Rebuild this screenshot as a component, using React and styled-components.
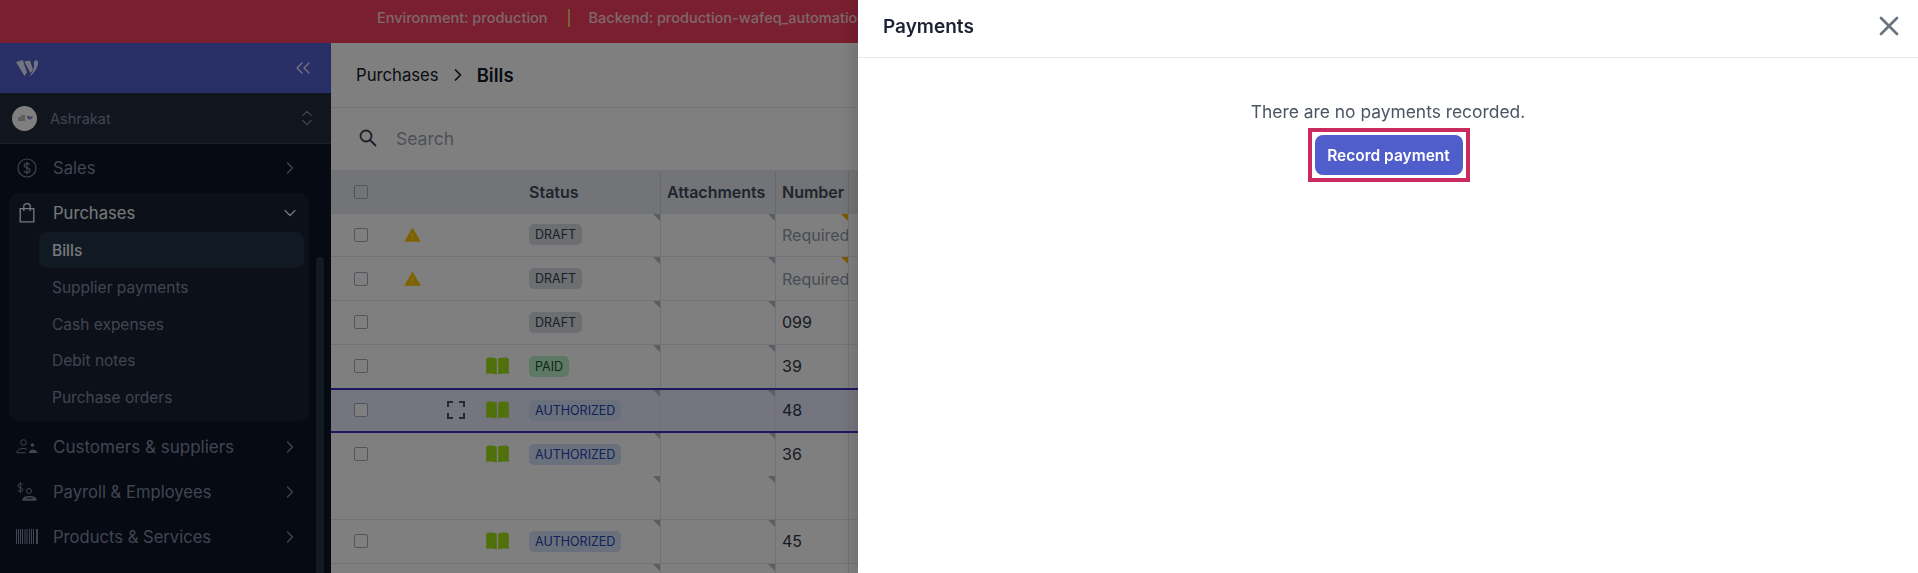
import styled, { createGlobalStyle } from "styled-components";
import { ChevronRight, ChevronDown, ChevronsUpDown, ChevronsLeft, X } from "lucide-react";

const GlobalStyle = createGlobalStyle`
  * { box-sizing: border-box; }
  html, body { margin: 0; height: 100%; overflow: hidden; }
  body { font-family: Inter, "Noto Sans", sans-serif; background: #fff; color: #1f2937; }
`;

const Page = styled.div`
  display: flex;
  flex-direction: column;
  height: 100vh;
  overflow: hidden;
`;
const EnvBar = styled.div`
  flex: 0 0 43px;
  display: flex;
  align-items: center;
  padding: 0 1060px 8px 377px;
  background: #f43e60;
  font-size: 14.5px;
  font-weight: 500;
  white-space: nowrap;
`;
const EnvText = styled.span`
  flex: ${(p) => (p.$clip ? "1 1 0" : "none")};
  min-width: 0;
  overflow: hidden;
  color: rgba(255, 255, 255, 0.75);
`;
const EnvDivider = styled.span`
  flex: none;
  width: 2px;
  height: 18px;
  margin: 0 19px 0 20px;
  background: #f5c26b;
`;
const Body = styled.div`
  flex: 1;
  display: flex;
  min-height: 0;
`;

/* sidebar */
const Sidebar = styled.aside`
  position: relative;
  flex: 0 0 331px;
  display: flex;
  flex-direction: column;
  background: #0c1426;
  overflow: hidden;
`;
const BrandRow = styled.div`
  flex: 0 0 50px;
  display: flex;
  align-items: center;
  justify-content: space-between;
  padding: 0 16px;
  background: #505ecc;
  color: #e6e8fa;
`;
const OrgRow = styled.div`
  flex: 0 0 51px;
  display: flex;
  align-items: center;
  padding: 0 14px 0 12px;
  background: #202a3c;
  border-bottom: 1px solid #334155;
`;
const Avatar = styled.div`
  width: 25px;
  height: 25px;
  border-radius: 50%;
  background: #fff;
  display: flex;
  align-items: center;
  justify-content: center;
  color: #505ecc;
  flex: none;
`;
const OrgName = styled.span`
  flex: 1;
  margin-left: 13px;
  font-size: 14.5px;
  color: #7f8ca3;
`;
const Nav = styled.nav`
  display: flex;
  flex-direction: column;
  padding: 1px 22px 0 9px;
`;
const NavItem = styled.div`
  height: 45px;
  display: flex;
  align-items: center;
  padding: 0 9px 0 0;
  color: ${(p) => (p.$active ? "#eef1f6" : "#7f8ca3")};
  svg {
    flex: none;
  }
`;
const NavIcon = styled.span`
  flex: 0 0 44px;
  display: flex;
  justify-content: center;
  padding-right: 6px;
  margin-left: -1px;
`;
const NavLabel = styled.span`
  flex: 1;
  font-size: ${(p) => p.$size || 16.6}px;
  margin-left: 1px;
`;
const NavGroup = styled.div`
  background: #182030;
  border-radius: 10px;
  height: 228px;
  margin: 3px 0;
`;
const GroupHead = styled(NavItem)`
  height: 39px;
`;
const SubList = styled.div`
  display: flex;
  flex-direction: column;
  padding: 0 5px 0 30px;
`;
const SubItem = styled.div`
  height: ${(p) => (p.$active ? "36px" : "36.7px")};
  margin-bottom: ${(p) => (p.$active ? "1px" : "0")};
  display: flex;
  align-items: center;
  padding-left: 13px;
  border-radius: 8px;
  font-size: 15.5px;
  background: ${(p) => (p.$active ? "#223246" : "transparent")};
  color: ${(p) => (p.$active ? "#eef1f6" : "#7f8ca3")};
  font-weight: ${(p) => (p.$active ? 500 : 400)};
`;
const Scroll = styled.div`
  position: absolute;
  top: 214px;
  bottom: 0;
  left: 316px;
  width: 8px;
  border-radius: 4px 4px 0 0;
  background: #283449;
`;

/* main */
const Main = styled.main`
  flex: 1;
  min-width: 0;
  display: flex;
  flex-direction: column;
`;
const Crumbs = styled.div`
  flex: 0 0 65px;
  display: flex;
  align-items: center;
  padding-left: 25px;
  padding-bottom: 1px;
  border-bottom: 1px solid #e3e6ea;
  color: #111827;
`;
const CrumbLink = styled.span`
  font-size: 16.7px;
`;
const CrumbSep = styled.span`
  display: flex;
  margin: 0 9px 0 9px;
`;
const CrumbNow = styled.span`
  font-size: 18.5px;
  font-weight: 600;
`;
const SearchRow = styled.div`
  flex: 0 0 63px;
  display: flex;
  align-items: center;
  padding: 0 0 2px 28px;
  gap: 19px;
  border-bottom: 1px solid #e3e6ea;
  color: #374151;
`;
const SearchHint = styled.span`
  font-size: 17.5px;
  color: #9ca3af;
`;
const Table = styled.div`
  display: flex;
  flex-direction: column;
`;
const Row = styled.div`
  position: relative;
  flex: none;
  height: ${(p) => (p.$head ? "42.5px" : "43.75px")};
  display: grid;
  grid-template-columns: 60px 42px 46px 37px 145px 115px 73px 1fr;
  align-items: stretch;
  background: ${(p) => (p.$head ? "#e6e9ee" : p.$selected ? "#e9ebfd" : "#fff")};
  border-bottom: ${(p) => (p.$flat ? "none" : "1px solid #e5e7eb")};
  ${(p) =>
    p.$selected &&
    `
    z-index: 1;
    height: 45.75px;
    margin: -1px 0;
    border-top: 2px solid #3b2fc4;
    border-bottom: 2px solid #3b2fc4;
  `}
`;
const Cell = styled.div`
  position: relative;
  display: flex;
  align-items: center;
  justify-content: ${(p) => (p.$center ? "center" : "flex-start")};
  padding-left: ${(p) => p.$pad || 0}px;
  border-right: ${(p) => (p.$line ? "1px solid #e2e5ea" : "none")};
  font-size: 16px;
  white-space: nowrap;
  overflow: hidden;
  color: ${(p) => (p.$muted ? "#9099a8" : "#2e3644")};
`;
const HeadCell = styled(Cell)`
  font-weight: 600;
  color: #3f4a5c;
  border-right-color: #cdd1d8;
`;
const Corner = styled.i`
  position: absolute;
  top: 0;
  right: 0;
  width: 0;
  height: 0;
  border-style: solid;
  border-width: 0 7px 7px 0;
  border-color: transparent ${(p) => (p.$warn ? "#f5b40f" : "#b4bcc7")} transparent transparent;
`;
const Check = styled.span`
  width: 14px;
  height: 14px;
  border: 1.5px solid #a3adbb;
  border-radius: 2px;
  background: ${(p) => (p.$head ? "transparent" : "#fff")};
`;
const Badge = styled.span`
  display: inline-flex;
  align-items: center;
  height: 21px;
  padding: 0 6px;
  border-radius: 5px;
  font-size: 12.5px;
  background: ${(p) => p.$bg};
  color: ${(p) => p.$fg};
`;

/* drawer */
const Scrim = styled.div`
  position: fixed;
  inset: 0;
  z-index: 2;
  background: rgba(0, 0, 0, 0.5);
`;
const Drawer = styled.section`
  position: fixed;
  top: 0;
  right: 0;
  bottom: 0;
  z-index: 3;
  width: 1060px;
  background: #fff;
  box-shadow: -6px 0 14px rgba(0, 0, 0, 0.12);
`;
const DrawerHead = styled.header`
  height: 58px;
  display: flex;
  align-items: center;
  justify-content: space-between;
  padding: 0 13px 5px 25px;
  border-bottom: 1px solid #e8e6ef;
  color: #6b7280;
`;
const DrawerTitle = styled.h2`
  margin: 0;
  font-size: 19px;
  font-weight: 600;
  color: #1c2233;
`;
const DrawerBody = styled.div`
  display: flex;
  flex-direction: column;
  align-items: center;
  padding-top: 42px;
`;
const Empty = styled.p`
  margin: 0 0 4px;
  font-size: 17.4px;
  line-height: 24px;
  color: #4b5563;
`;
const ButtonFrame = styled.div`
  display: flex;
  margin-left: 1px;
  padding: 3px;
  border: 4px solid #cb2a5f;
`;
const RecordButton = styled.button`
  width: 148px;
  height: 40px;
  border: 0;
  border-radius: 8px;
  background: #505ecc;
  color: #fff;
  font-family: inherit;
  font-size: 15.5px;
  font-weight: 600;
`;

const dollar = (
  <svg width="20" height="20" viewBox="0 0 20 20" fill="none" stroke="currentColor" strokeWidth="1.2">
    <circle cx="10" cy="10" r="9" />
    <path d="M12.8 6.9c-.5-1-1.5-1.5-2.8-1.5-1.6 0-2.8.8-2.8 2.2 0 3 5.8 1.600 5.800 4.700 0 1.400-1.300 2.300-3 2.300-1.400 0-2.500-.6-3-1.700M10 3.800v12.400" />
  </svg>
);
const bag = (
  <svg width="16" height="20" viewBox="0 0 16 20" fill="none" stroke="currentColor" strokeWidth="1.3">
    <path d="M1.2 5.600h13.600v13.200H1.200zM4.800 8V3.200a3.200 2.600 0 0 1 6.400 0V8" />
  </svg>
);
const people = (
  <svg width="22" height="15" viewBox="0 0 22 15" fill="none" stroke="currentColor" strokeWidth="1">
    <circle cx="7.500" cy="3.500" r="2.800" />
    <path d="M.8 13.800c0-2.600 2.800-4.300 6.400-4.300 1.300 0 2.500.2 3.500.7M.8 13.800h9" />
    <circle cx="16.500" cy="6" r="1.800" fill="currentColor" stroke="none" />
    <path d="M12.800 14c.2-2.400 1.800-3.600 4-3.600s4.500 1.200 4.700 3.600z" fill="currentColor" stroke="none" />
  </svg>
);
const payroll = (
  <svg width="22" height="20" viewBox="0 0 22 20" fill="none" stroke="currentColor" strokeWidth="1">
    <path d="M6.800 3C6.300 2.200 5.500 1.800 4.300 1.800 2.900 1.800 1.800 2.500 1.800 3.700c0 2.500 5 1.300 5 3.800 0 1.200-1 1.900-2.500 1.900-1.200 0-2.200-.5-2.700-1.400M4.300.3v10.700" />
    <circle cx="13" cy="9" r="2.500" />
    <path d="M6.500 18.800v-1.300c0-2.300 2.800-3.600 7-3.600s7 1.300 7 3.600v1.300z" fill="currentColor" stroke="none" />
    <path d="M10.500 16.200h6" stroke="#0c1426" />
  </svg>
);
const barcode = (
  <svg width="22" height="15" viewBox="0 0 22 15" fill="currentColor">
    {[0, 2, 4, 6, 8.500, 10.500, 13, 15, 17, 20].map((x) => (
      <rect key={x} x={x} y="0" width={x === 20 ? 2 : 1} height="15" />
    ))}
  </svg>
);
const logoPaths = (
  <>
    <path d="M0 3 6.800 1 11 13.500 8.500 17z" />
    <path d="M8.300 2.500 14 1.500l3 9-2.500 3.800z" />
    <path d="M17.800 3.700c.2-1.700 2-3 3.800-2.700-.6 1-.5 1.700.4 2.200.3 4.800-3.500 10.700-9 14.800 3.400-4 5.900-9.100 4.800-14.300z" />
  </>
);
const logo = (
  <svg width="24" height="18" viewBox="0 0 24 18" fill="currentColor">
    {logoPaths}
  </svg>
);
const miniLogo = (
  <svg width="16" height="7" viewBox="0 0 16 7">
    <path d="M4 1h4M1 3h7M1 5h7" stroke="#555" strokeWidth=".8" />
    <svg x="10" y="0" width="6" height="6" viewBox="0 0 24 18" fill="#505ecc">
      {logoPaths}
    </svg>
  </svg>
);
const warning = (
  <svg width="17" height="15" viewBox="0 0 16 14">
    <path d="M8 .4 15.800 13.800H.2z" fill="#ffc400" />
    <path d="M8 6v3.600M8 10.600v1.400" stroke="#fde68a" strokeWidth="1" />
  </svg>
);
const book = (
  <svg width="23" height="18" viewBox="0 0 23 18" fill="#a0e019">
    <path d="M2 .8C5 .4 8 .6 10.800 1.600V17.400C8 16.400 4.500 16.200 1.500 16.800A1 1 0 0 1 .2 16V2.600C.2 1.500 1 .9 2 .8z" />
    <path d="M21 .8C18 .4 15 .6 12.200 1.600V17.400C15 16.400 18.500 16.200 21.500 16.800A1 1 0 0 0 22.800 16V2.600C22.800 1.500 22 .9 21 .8z" />
  </svg>
);
const expand = (
  <svg width="18" height="18" viewBox="0 0 18 18" fill="none" stroke="#4b5563" strokeWidth="2">
    <path d="M1 6V1h5M12 1h5v5M17 12v5h-5M6 17H1v-5" />
  </svg>
);
const loupe = (
  <svg width="18" height="18" viewBox="0 0 18 18" fill="none" stroke="currentColor" strokeWidth="1.800">
    <circle cx="7" cy="7" r="5.500" />
    <path d="m11 11 6 6" />
  </svg>
);

const draft = { label: "DRAFT", bg: "#d9dde3", fg: "#374151" };
const paid = { label: "PAID", bg: "#bdf0cd", fg: "#14532d" };
const authorized = { label: "AUTHORIZED", bg: "#d5e2f8", fg: "#2342b5" };

const rows = [
  { warn: true, badge: draft, number: "Required", missing: true },
  { warn: true, badge: draft, number: "Required", missing: true },
  { badge: draft, number: "099" },
  { book: true, badge: paid, number: "39" },
  { book: true, expand: true, badge: authorized, number: "48", selected: true },
  { book: true, badge: authorized, number: "36", flat: true },
  {},
  { book: true, badge: authorized, number: "45" },
  {},
];

const subItems = ["Supplier payments", "Cash expenses", "Debit notes", "Purchase orders"];

const NavEntry = ({ icon, label, size }) => (
  <NavItem>
    <NavIcon>{icon}</NavIcon>
    <NavLabel $size={size}>{label}</NavLabel>
    <ChevronRight size={20} strokeWidth={1.5} />
  </NavItem>
);

const App = () => {
  return (
    <Page>
      <GlobalStyle />
      <EnvBar>
        <EnvText>Environment: production</EnvText>
        <EnvDivider />
        <EnvText $clip>Backend: production-wafeq_automation_tests</EnvText>
      </EnvBar>
      <Body>
        <Sidebar>
          <BrandRow>
            {logo}
            <ChevronsLeft size={24} strokeWidth={1.4} />
          </BrandRow>
          <OrgRow>
            <Avatar>{miniLogo}</Avatar>
            <OrgName>Ashrakat</OrgName>
            <ChevronsUpDown size={20} strokeWidth={1.4} color="#7f8ca3" />
          </OrgRow>
          <Nav>
            <NavEntry icon={dollar} label="Sales" />
            <NavGroup>
              <GroupHead $active>
                <NavIcon>{bag}</NavIcon>
                <NavLabel>Purchases</NavLabel>
                <ChevronDown size={20} strokeWidth={1.5} />
              </GroupHead>
              <SubList>
                <SubItem $active>Bills</SubItem>
                {subItems.map((item) => (
                  <SubItem key={item}>{item}</SubItem>
                ))}
              </SubList>
            </NavGroup>
            <NavEntry icon={people} label="Customers & suppliers" size={17} />
            <NavEntry icon={payroll} label="Payroll & Employees" />
            <NavEntry icon={barcode} label="Products & Services" />
          </Nav>
          <Scroll />
        </Sidebar>
        <Main>
          <Crumbs>
            <CrumbLink>Purchases</CrumbLink>
            <CrumbSep>
              <ChevronRight size={20} strokeWidth={2} />
            </CrumbSep>
            <CrumbNow>Bills</CrumbNow>
          </Crumbs>
          <SearchRow>
            {loupe}
            <SearchHint>Search</SearchHint>
          </SearchRow>
          <Table>
            <Row $head>
              <Cell $center>
                <Check $head />
              </Cell>
              <Cell />
              <Cell />
              <Cell />
              <HeadCell $pad={13} $line>
                Status
              </HeadCell>
              <HeadCell $pad={6} $line>
                Attachments
              </HeadCell>
              <HeadCell $pad={6} $line>
                Number
              </HeadCell>
              <Cell />
            </Row>
            {rows.map((row, i) => (
              <Row key={i} $selected={row.selected} $flat={row.flat}>
                <Cell $center>{row.badge && <Check />}</Cell>
                <Cell $center>{row.warn && warning}</Cell>
                <Cell $center>{row.expand && expand}</Cell>
                <Cell $center>{row.book && book}</Cell>
                <Cell $pad={13} $line>
                  {row.badge && (
                    <Badge $bg={row.badge.bg} $fg={row.badge.fg}>
                      {row.badge.label}
                    </Badge>
                  )}
                  <Corner />
                </Cell>
                <Cell $line>
                  <Corner />
                </Cell>
                <Cell $pad={6} $line $muted={row.missing}>
                  {row.number}
                  {row.missing && <Corner $warn />}
                </Cell>
                <Cell />
              </Row>
            ))}
          </Table>
        </Main>
      </Body>
      <Scrim />
      <Drawer>
        <DrawerHead>
          <DrawerTitle>Payments</DrawerTitle>
          <X size={32} strokeWidth={2} />
        </DrawerHead>
        <DrawerBody>
          <Empty>There are no payments recorded.</Empty>
          <ButtonFrame>
            <RecordButton>Record payment</RecordButton>
          </ButtonFrame>
        </DrawerBody>
      </Drawer>
    </Page>
  );
};

export default App;
